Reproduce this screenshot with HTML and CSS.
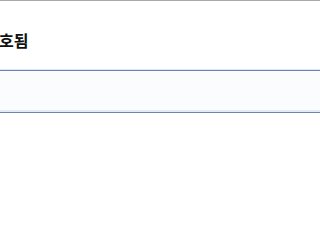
FILE: index.html
```html
<!DOCTYPE html>
<html lang="ko">
<head>
<meta charset="utf-8">
<link rel="stylesheet" href="styles.css">
</head>
<body>
<div class="page">
  <header class="head">
    <h2 class="title">호됨</h2>
  </header>
  <div class="row"></div>
</div>
</body>
</html>
```
FILE: styles.css
```css
html, body {
  margin: 0;
  padding: 0;
  background: #ffffff;
}
.page {
  border-top: 1px solid #a9a9a9;
  font-family: "Noto Sans CJK KR", "Noto Sans", sans-serif;
}
.head {
  box-sizing: border-box;
  height: 69px;
  padding-top: 27px;
  border-bottom: 1px solid #dfe6f1;
}
.title {
  margin: 0 0 0 -1px;
  font-size: 16px;
  font-weight: 700;
  color: #111111;
  line-height: 24px;
}
.row {
  height: 41px;
  background: #fbfcfd;
  border-top: 1px solid #6a84b8;
  border-bottom: 1px solid #6a84b8;
  box-shadow: inset 0 -2px 0 #e3eaf5;
}
```
